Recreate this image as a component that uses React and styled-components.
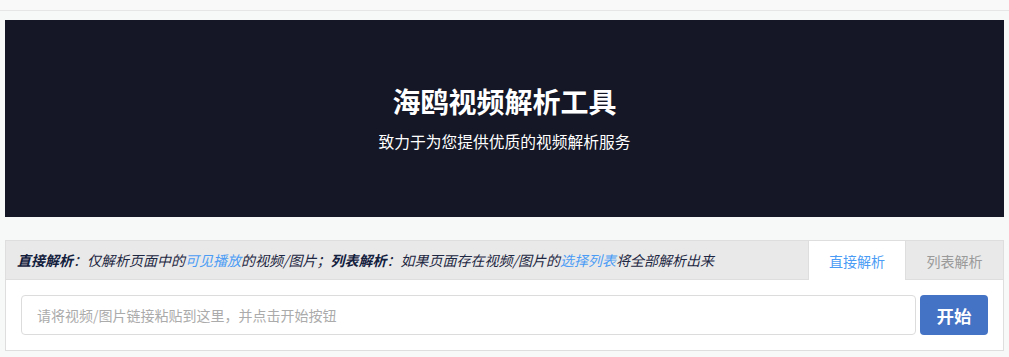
import React, { useState } from 'react';
import styled, { createGlobalStyle } from 'styled-components';

const GlobalStyle = createGlobalStyle`
  html, body {
    margin: 0;
    padding: 0;
    background: #f7f8f8;
    font-family: "Noto Sans CJK SC", "Noto Sans", "Liberation Sans", sans-serif;
  }
  * { box-sizing: border-box; }
`;

const TopBar = styled.div`
  height: 11px;
  background: #f9f9f9;
  border-bottom: 1px solid #e6e6e6;
`;

const Container = styled.div`
  padding: 9px 5px 0 5px;
`;

const Banner = styled.div`
  height: 197px;
  background: #151726;
  color: #fff;
  display: flex;
  flex-direction: column;
  align-items: center;
  justify-content: center;
  padding-bottom: 2px;
`;

const Title = styled.h1`
  margin: 0;
  font-size: 28px;
  line-height: 40px;
  font-weight: 700;
`;

const Subtitle = styled.p`
  margin: 9px 0 0;
  font-size: 15.75px;
  line-height: 24px;
`;

const Panel = styled.div`
  margin-top: 23px;
  border: 1px solid #dedede;
  background: #fff;
`;

const PanelHeader = styled.div`
  display: flex;
  align-items: stretch;
  height: 39px;
  background: #e9e9e9;
  border-bottom: 1px solid #dedede;
`;

const Info = styled.div`
  flex: 1;
  padding-left: 11px;
  display: flex;
  align-items: center;
  font-size: 14px;
  font-style: italic;
  color: #1d2742;
  white-space: nowrap;
`;

const Label = styled.b`
  color: #13203d;
`;

const Link = styled.span`
  color: #4b9cf5;
`;

const Tab = styled.div`
  width: ${(p) => p.$w}px;
  display: flex;
  align-items: center;
  justify-content: center;
  font-size: 14px;
  margin-bottom: -1px;
  border-left: 1px solid #dedede;
  background: ${(p) => (p.$active ? '#fff' : 'transparent')};
  color: ${(p) => (p.$active ? '#4b9cf5' : '#9a9a9a')};
  cursor: pointer;
`;

const Body = styled.div`
  display: flex;
  gap: 4px;
  padding: 15px;
`;

const Input = styled.input`
  flex: 1;
  height: 40px;
  border: 1px solid #dcdcdc;
  border-radius: 4px;
  padding: 0 15px;
  font-family: inherit;
  font-size: 14px;
  color: #333;
  outline: none;
  &::placeholder {
    color: #ababab;
  }
`;

const StartButton = styled.button`
  width: 68px;
  height: 40px;
  border: none;
  border-radius: 4px;
  background: #4472c4;
  color: #fff;
  font-family: inherit;
  font-size: 17.5px;
  font-weight: 700;
  cursor: pointer;
`;

const App = () => {
  const [tab, setTab] = useState(0);
  return (
    <>
      <GlobalStyle />
      <TopBar />
      <Container>
        <Banner>
          <Title>海鸥视频解析工具</Title>
          <Subtitle>致力于为您提供优质的视频解析服务</Subtitle>
        </Banner>
        <Panel>
          <PanelHeader>
            <Info>
              <Label>直接解析</Label>：仅解析页面中的<Link>可见播放</Link>的视频/图片；
              <Label>列表解析</Label>：如果页面存在视频/图片的<Link>选择列表</Link>将全部解析出来
            </Info>
            <Tab $w={97} $active={tab === 0} onClick={() => setTab(0)}>直接解析</Tab>
            <Tab $w={98} $active={tab === 1} onClick={() => setTab(1)}>列表解析</Tab>
          </PanelHeader>
          <Body>
            <Input placeholder="请将视频/图片链接粘贴到这里，并点击开始按钮" />
            <StartButton>开始</StartButton>
          </Body>
        </Panel>
      </Container>
    </>
  );
};

export default App;
